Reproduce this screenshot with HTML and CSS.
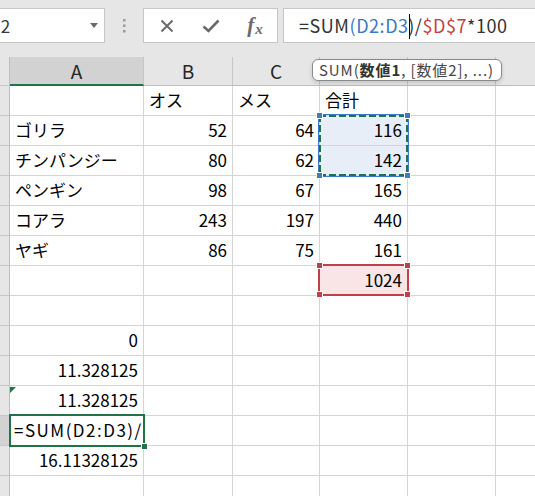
FILE: index.html
```html
<!DOCTYPE html>
<html lang="ja">
<head>
  <meta charset="UTF-8">
  <title>Excel - SUM</title>
  <link rel="stylesheet" href="styles.css">
</head>
<body>
  <div class="toolbar">
    <div class="name-box">
      <span class="name-text">A12</span>
      <svg class="drop" width="8" height="5" viewBox="0 0 8 5"><path d="M0 0H8L4 5Z" fill="#6b6b6b"/></svg>
    </div>
    <div class="grip">
      <svg width="4" height="14" viewBox="0 0 4 14"><rect x="1" y="0" width="2.5" height="2.5" fill="#9a9a9a"/><rect x="1" y="5.5" width="2.5" height="2.5" fill="#9a9a9a"/><rect x="1" y="11" width="2.5" height="2.5" fill="#9a9a9a"/></svg>
    </div>
    <div class="fx-buttons">
      <span class="fx-btn">
        <svg width="14" height="14" viewBox="0 0 14 14"><path d="M1.5 1.5L12.5 12.5M12.5 1.5L1.5 12.5" stroke="#6b6b6b" stroke-width="2" fill="none"/></svg>
      </span>
      <span class="fx-btn">
        <svg width="18" height="14" viewBox="0 0 18 14"><path d="M1.5 7.5L6.5 12L16.5 1.5" stroke="#6b6b6b" stroke-width="2.6" fill="none"/></svg>
      </span>
      <span class="fx-btn fx-label">f<span class="fx-x">x</span></span>
    </div>
    <div class="formula-box">
      <span class="f-dark">=SUM</span><span class="f-blue">(D2:D3</span><span class="caret"></span><span class="f-dark">)/</span><span class="f-red">$D$7</span><span class="f-dark">*100</span>
    </div>
  </div>

  <div class="sheet">
    <div class="rh"></div><div class="ch on">A</div><div class="ch">B</div><div class="ch">C</div><div class="ch">D</div><div class="ch">E</div><div class="ch">F</div>

    <div class="rh"></div><div class="c"></div><div class="c">オス</div><div class="c">メス</div><div class="c">合計</div><div class="c"></div><div class="c"></div>
    <div class="rh"></div><div class="c">ゴリラ</div><div class="c num">52</div><div class="c num">64</div><div class="c num copied">116</div><div class="c"></div><div class="c"></div>
    <div class="rh"></div><div class="c">チンパンジー</div><div class="c num">80</div><div class="c num">62</div><div class="c num copied">142</div><div class="c"></div><div class="c"></div>
    <div class="rh"></div><div class="c">ペンギン</div><div class="c num">98</div><div class="c num">67</div><div class="c num">165</div><div class="c"></div><div class="c"></div>
    <div class="rh"></div><div class="c">コアラ</div><div class="c num">243</div><div class="c num">197</div><div class="c num">440</div><div class="c"></div><div class="c"></div>
    <div class="rh"></div><div class="c">ヤギ</div><div class="c num">86</div><div class="c num">75</div><div class="c num">161</div><div class="c"></div><div class="c"></div>
    <div class="rh"></div><div class="c"></div><div class="c"></div><div class="c"></div><div class="c num ref">1024</div><div class="c"></div><div class="c"></div>
    <div class="rh"></div><div class="c"></div><div class="c"></div><div class="c"></div><div class="c"></div><div class="c"></div><div class="c"></div>
    <div class="rh"></div><div class="c num">0</div><div class="c"></div><div class="c"></div><div class="c"></div><div class="c"></div><div class="c"></div>
    <div class="rh"></div><div class="c num">11.328125</div><div class="c"></div><div class="c"></div><div class="c"></div><div class="c"></div><div class="c"></div>
    <div class="rh"></div><div class="c num warn">11.328125</div><div class="c"></div><div class="c"></div><div class="c"></div><div class="c"></div><div class="c"></div>
    <div class="rh on"></div><div class="c formula">=SUM(D2:D3)/</div><div class="c"></div><div class="c"></div><div class="c"></div><div class="c"></div><div class="c"></div>
    <div class="rh"></div><div class="c num">16.11328125</div><div class="c"></div><div class="c"></div><div class="c"></div><div class="c"></div><div class="c"></div>
    <div class="rh"></div><div class="c"></div><div class="c"></div><div class="c"></div><div class="c"></div><div class="c"></div><div class="c"></div>

    <!-- selection overlays -->
    <div class="copy-range">
      <span class="knob tl"></span><span class="knob tr"></span><span class="knob bl"></span><span class="knob br"></span>
    </div>
    <div class="ref-range">
      <span class="knob tl"></span><span class="knob tr"></span><span class="knob bl"></span><span class="knob br"></span>
    </div>
    <div class="active-cell"><span class="fill-handle"></span></div>

    <div class="tooltip">SUM(<b>数値1</b>, [数値2], ...)</div>
  </div>
</body>
</html>
```

FILE: styles.css
```css
html, body {
  margin: 0;
  padding: 0;
  height: 100%;
  overflow: hidden;
}

body {
  font-family: "Noto Sans CJK JP", "Noto Sans", sans-serif;
  background-color: white;
  color: #000;
}

/* Formula bar */
.toolbar {
  display: flex;
  align-items: flex-start;
  height: 57px;
  box-sizing: border-box;
  padding-top: 8px;
  background-color: #e6e6e6;
}

.name-box {
  display: flex;
  align-items: center;
  justify-content: space-between;
  margin-left: -30px;
  width: 135px;
  height: 35px;
  box-sizing: border-box;
  padding: 0 6px 0 10px;
  background-color: white;
  border: 1px solid #c6c6c6;
  font-size: 17px;
  color: #2b3a4a;
}

.grip {
  display: flex;
  align-items: center;
  justify-content: center;
  width: 38px;
  height: 35px;
}

.fx-buttons {
  display: flex;
  align-items: center;
  width: 135px;
  height: 35px;
  box-sizing: border-box;
  padding-left: 1px;
  background-color: white;
  border: 1px solid #c6c6c6;
}

.fx-btn {
  display: flex;
  align-items: center;
  justify-content: center;
  width: 44px;
  height: 100%;
}

.fx-label {
  align-items: baseline;
  padding-top: 4px;
  box-sizing: border-box;
  font-family: "Liberation Serif", serif;
  font-style: italic;
  font-weight: bold;
  font-size: 21px;
  line-height: 24px;
  color: #6b6b6b;
}

.fx-x {
  font-size: 15px;
  position: relative;
  top: 2px;
  margin-left: 1px;
}

.formula-box {
  flex: 1;
  margin-left: 5px;
  margin-right: -20px;
  height: 35px;
  box-sizing: border-box;
  padding-left: 15px;
  background-color: white;
  border: 1px solid #c6c6c6;
  font-size: 18px;
  line-height: 32px;
  letter-spacing: 0.55px;
  white-space: nowrap;
}

.f-dark { color: #333; }
.f-blue { color: #3a78c4; }
.f-red { color: #c4403e; }

.caret {
  display: inline-block;
  width: 0;
  height: 25px;
  border-left: 1.5px solid #000;
  margin-right: -1.5px;
  vertical-align: -6px;
}

/* Sheet grid */
.sheet {
  position: relative;
  display: grid;
  grid-template-columns: 10px 134px 89px 87px 88px 88px 88px;
  grid-template-rows: 29px;
  grid-auto-rows: 30px;
}

.c {
  box-sizing: border-box;
  border-right: 1px solid #d4d4d4;
  border-bottom: 1px solid #d4d4d4;
  padding: 0 5px;
  font-size: 17px;
  line-height: 28px;
  white-space: nowrap;
}

.num {
  text-align: right;
}

.copied {
  background-color: #e8eef8;
}

.ref {
  background-color: #f9e5e6;
}

.formula {
  padding-left: 4px;
  letter-spacing: 1.5px;
}

.warn {
  position: relative;
}

.warn::before {
  content: "";
  position: absolute;
  left: 0;
  top: 1px;
  border-top: 6px solid #217346;
  border-right: 6px solid transparent;
}

.rh {
  box-sizing: border-box;
  background-color: #e6e6e6;
  border-right: 1px solid #bdbdbd;
  border-bottom: 1px solid #c6c6c6;
}

.rh.on {
  background-color: #d2d2d2;
}

.ch {
  box-sizing: border-box;
  background-color: #e6e6e6;
  border-right: 1px solid #c6c6c6;
  border-bottom: 1px solid #bdbdbd;
  text-align: center;
  font-size: 19px;
  line-height: 28px;
  color: #262626;
}

.ch.on {
  background-color: #d2d2d2;
  border-bottom: 2px solid #217346;
  line-height: 27px;
}

/* Overlays */
.copy-range {
  position: absolute;
  left: 318px;
  top: 57px;
  width: 91px;
  height: 63px;
  box-sizing: border-box;
  border: 1px solid #3b7bc6;
  background:
    repeating-linear-gradient(90deg, #217346 0 7px, transparent 7px 10px) left top / 100% 2px no-repeat,
    repeating-linear-gradient(90deg, #217346 0 7px, transparent 7px 10px) left bottom / 100% 2px no-repeat,
    repeating-linear-gradient(180deg, #217346 0 7px, transparent 7px 10px) left top / 2px 100% no-repeat,
    repeating-linear-gradient(180deg, #217346 0 7px, transparent 7px 10px) right top / 2px 100% no-repeat;
}

.ref-range {
  position: absolute;
  left: 318px;
  top: 207px;
  width: 91px;
  height: 32px;
  box-sizing: border-box;
  border: 2px solid #c0404a;
}

.knob {
  position: absolute;
  width: 5px;
  height: 5px;
  background-color: #3b7bc6;
  border: 1px solid white;
}

.ref-range .knob {
  background-color: #c0404a;
}

.copy-range .tl { left: -3px; top: -3px; }
.copy-range .tr { right: -3px; top: -3px; }
.copy-range .bl { left: -3px; bottom: -3px; }
.copy-range .br { right: -3px; bottom: -3px; }

.ref-range .tl { left: -4px; top: -4px; }
.ref-range .tr { right: -4px; top: -4px; }
.ref-range .bl { left: -4px; bottom: -4px; }
.ref-range .br { right: -4px; bottom: -4px; }

.active-cell {
  position: absolute;
  left: 9px;
  top: 357px;
  width: 136px;
  height: 33px;
  box-sizing: border-box;
  border: 2px solid #217346;
}

.fill-handle {
  position: absolute;
  right: -5px;
  bottom: -5px;
  width: 5px;
  height: 5px;
  background-color: #217346;
  border: 1px solid white;
}

.tooltip {
  position: absolute;
  left: 312px;
  top: 2px;
  width: 190px;
  height: 22px;
  box-sizing: border-box;
  padding-left: 6px;
  background-color: white;
  border: 1px solid #8a8a8a;
  border-radius: 6px;
  box-shadow: 0 2px 4px rgba(0, 0, 0, 0.15);
  font-size: 15px;
  line-height: 20px;
  letter-spacing: 0.9px;
  color: #444;
  white-space: nowrap;
}

.tooltip b {
  color: #333;
}
```
